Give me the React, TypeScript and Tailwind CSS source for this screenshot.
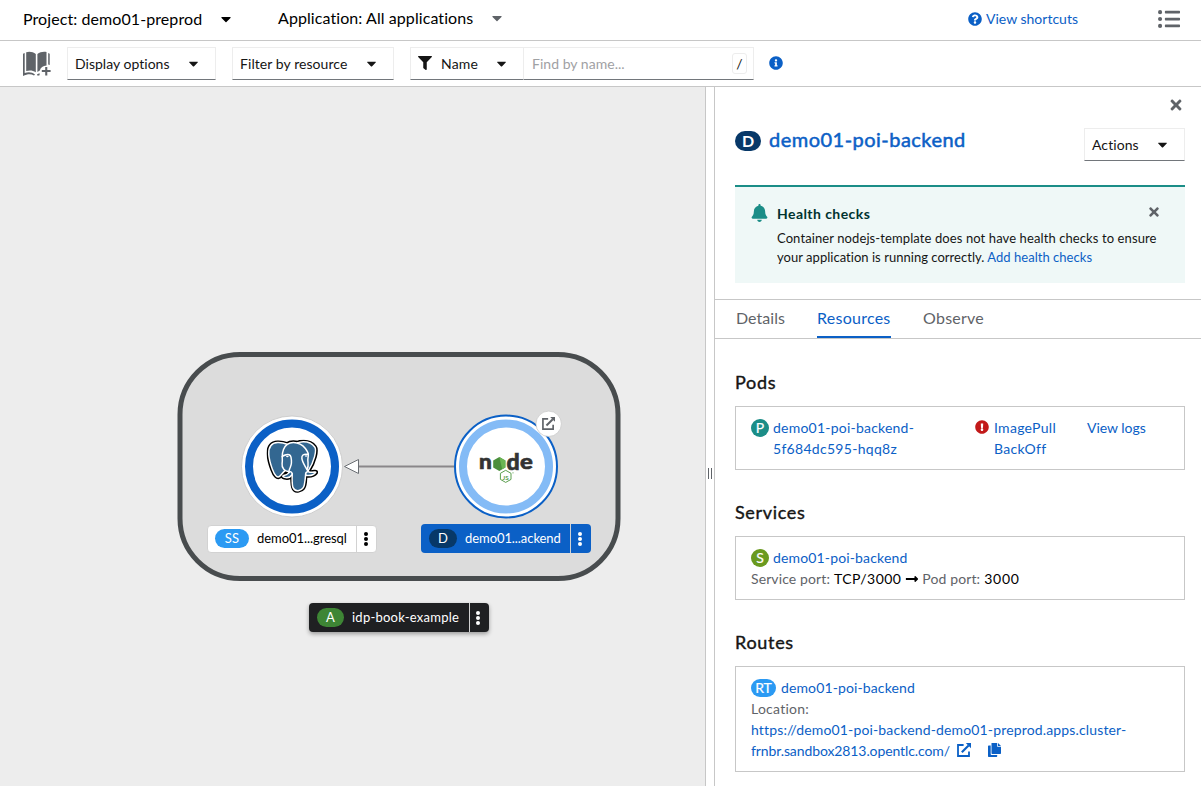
import type { ReactNode } from 'react';
import {
  FaBell,
  FaCaretDown,
  FaExclamationCircle,
  FaFilter,
  FaInfoCircle,
  FaListUl,
  FaLongArrowAltRight,
  FaQuestionCircle,
  FaTimes,
} from 'react-icons/fa';

function ExternalLink({ className }: { className: string }) {
  return (
    <svg viewBox="0 0 14 14" className={className} fill="none" stroke="currentColor">
      <path d="M6.6 2H1v11h11V8.4" strokeWidth="1.8" />
      <path d="M4.8 9.2 11.6 2.4" strokeWidth="2.1" />
      <path d="M8.8 0H14v5.2z" fill="currentColor" stroke="none" />
    </svg>
  );
}

function CopyIcon() {
  return (
    <svg viewBox="0 0 13 14" className="h-[14px] w-[13px]" fill="currentColor">
      <path d="M3.5 0h5.7v3.8H13v6.5a.7.7 0 0 1-.7.7H4.2a.7.7 0 0 1-.7-.7z" />
      <path d="M10 0l3 3h-3z" />
      <path d="M0 3.2c0-.4.3-.7.7-.7h2v8.7c0 .4.3.7.7.7h5.8v1.4c0 .4-.3.7-.7.7H.7a.7.7 0 0 1-.7-.7z" />
    </svg>
  );
}

function BookIcon() {
  return (
    <svg viewBox="0 0 28 26" className="h-[26px] w-7" fill="#5f6368">
      <path d="M3.200 1.200C6.500 .1 10 .8 12.800 3V21.200C9.800 19.200 6.500 19 3.200 20z" />
      <path d="M14.400 3C17 1.200 20 .3 23.500 1V14.500C20 14.800 17.500 16.500 16.800 19.500L14.400 21z" />
      <path d="M0 2.800l1.700-.8V22C5.500 20.500 9 21 12 23.400l-1 1.200C8 22.800 4.500 23 0 25z" />
      <path d="M14 23.300l2.600-1v1.900l-2 .5zM25.200 2l1.500.8V14l-1.500-.4zM22.200 16h2.100v3H27.600v2.100h-3.300v3.400h-2.100v-3.400h-3.400V19h3.400z" />
    </svg>
  );
}

function Toggle({ className, label }: { className: string; label: ReactNode }) {
  return (
    <button className={`flex h-[33px] items-center border border-[#ededed] border-b-[#72767b] text-left text-sm text-[#151515] ${className}`}>
      {label}
      <FaCaretDown className="h-[15px] w-[15px]" />
    </button>
  );
}

function PostgresLogo() {
  return (
    <svg x="266.500" y="439.500" width="51.500" height="53.500" viewBox="0 0 432.071 445.383">
      <path
        fill="#000"
        stroke="#000"
        strokeWidth="37.4"
        d="M323.205,324.227c2.833-23.601,1.984-27.062,19.563-23.239l4.463,0.392c13.517,0.615,31.199-2.174,41.587-7c22.362-10.376,35.622-27.7,13.572-23.148c-50.297,10.376-53.755-6.655-53.755-6.655c53.111-78.803,75.313-178.836,56.149-203.322C352.514-5.534,262.036,26.049,260.522,26.869l-0.482,0.089c-9.938-2.062-21.06-3.294-33.554-3.496c-22.761-0.374-40.032,5.967-53.133,15.904c0,0-161.408-66.498-153.899,83.628c1.597,31.936,45.777,241.655,98.47,178.31c19.259-23.163,37.871-42.748,37.871-42.748c9.242,6.14,20.307,9.272,31.912,8.147l0.897-0.765c-0.281,2.876-0.157,5.689,0.359,9.019c-13.572,15.167-9.584,17.83-36.723,23.416c-27.457,5.659-11.326,15.734-0.797,18.367c12.768,3.193,42.305,7.716,62.268-20.224l-0.795,3.188c5.325,4.26,4.965,30.619,5.72,49.452c0.756,18.834,2.017,36.409,5.856,46.771c3.839,10.36,8.369,37.05,44.036,29.406c29.809-6.388,52.6-15.582,54.677-101.107"
      />
      <path
        fill="#336791"
        d="M402.395,271.23c-50.302,10.376-53.76-6.655-53.76-6.655c53.111-78.808,75.313-178.843,56.153-203.326c-52.27-66.785-142.752-35.2-144.262-34.38l-0.486,0.087c-9.938-2.063-21.06-3.292-33.56-3.496c-22.761-0.373-40.026,5.967-53.127,15.902c0,0-161.411-66.495-153.904,83.63c1.597,31.938,45.776,241.657,98.471,178.312c19.26-23.163,37.869-42.748,37.869-42.748c9.243,6.14,20.308,9.272,31.908,8.147l0.901-0.765c-0.28,2.876-0.152,5.689,0.361,9.019c-13.575,15.167-9.586,17.83-36.723,23.416c-27.459,5.659-11.328,15.734-0.796,18.367c12.768,3.193,42.307,7.716,62.266-20.224l-0.796,3.188c5.319,4.26,9.054,27.711,8.428,48.969c-0.626,21.259-1.044,35.854,3.147,47.254c4.191,11.4,8.368,37.05,44.042,29.406c29.809-6.388,45.256-22.942,47.405-50.555c1.525-19.631,4.976-16.729,5.194-34.28l2.768-8.309c3.192-26.611,0.507-35.196,18.872-31.203l4.463,0.392c13.517,0.615,31.208-2.174,41.591-7c22.358-10.376,35.618-27.7,13.573-23.148z"
      />
      <g fill="none" stroke="#fff" strokeWidth="12.5" strokeLinecap="round" strokeLinejoin="round">
        <path d="M215.866,286.484c-1.385,49.516,0.348,99.377,5.193,111.495c4.848,12.118,15.223,35.688,50.9,28.045c29.806-6.39,40.651-18.756,45.357-46.051c3.466-20.082,10.148-75.854,11.005-87.281" />
        <path d="M173.104,38.256c0,0-161.521-66.016-154.012,84.109c1.597,31.938,45.779,241.664,98.473,178.316c19.256-23.166,36.671-41.335,36.671-41.335" />
        <path d="M260.349,26.207c-5.591,1.753,89.848-34.889,144.087,34.417c19.159,24.484-3.043,124.519-56.153,203.329" />
        <path d="M348.282,263.953c0,0,3.461,17.036,53.764,6.653c22.04-4.552,8.776,12.774-13.577,23.155c-18.345,8.514-59.474,10.696-60.146-1.069c-1.729-30.355,21.647-21.133,19.96-28.739c-1.525-6.85-11.979-13.573-18.894-30.338c-6.037-14.633-82.796-126.849,21.287-110.183c3.813-0.789-27.146-99.002-124.553-100.599c-97.385-1.597-94.19,119.762-94.19,119.762" />
        <path d="M188.604,274.334c-13.577,15.166-9.584,17.829-36.723,23.417c-27.459,5.66-11.326,15.733-0.797,18.365c12.768,3.195,42.307,7.718,62.266-20.229c6.078-8.509-0.036-22.086-8.385-25.547c-4.034-1.671-9.428-3.765-16.361,3.994z" />
        <path d="M187.715,274.069c-1.368-8.917,2.93-19.528,7.536-31.942c6.922-18.626,22.893-37.255,10.117-96.339c-9.523-44.029-73.396-9.163-73.436-3.193c-0.039,5.968,2.889,30.26-1.067,58.548c-5.162,36.913,23.488,68.132,56.479,64.938" />
        <path d="M350.676,123.432c0.863,15.994-3.445,26.888-3.988,43.914c-0.804,24.748,11.799,53.074-7.191,81.435" />
      </g>
      <ellipse cx="175" cy="141" rx="11" ry="7" fill="#fff" />
      <ellipse cx="332" cy="136" rx="10" ry="6" fill="#fff" />
    </svg>
  );
}

function NodeLogo() {
  return (
    <g fontFamily="Lato, sans-serif">
      <g fill="#333" stroke="#333" strokeWidth=".6" fontWeight="900">
        <text x="478.900" y="469.300" fontSize="20" textLength="12.800" lengthAdjust="spacingAndGlyphs">n</text>
        <text x="506.600" y="469.500" fontSize="22" textLength="13.200" lengthAdjust="spacingAndGlyphs">d</text>
        <text x="520" y="469.300" fontSize="20" textLength="12.800" lengthAdjust="spacingAndGlyphs">e</text>
      </g>
      <path d="M499.300 457l6.100 3.500v7l-6.100 3.500-6.100-3.500v-7z" fill="#4a8f3c" />
      <path d="M499.300 457l6.100 3.500v7l-3.200 1.800z" fill="#6bb552" />
      <path d="M505.700 470.300l5.300 3v6.100l-5.300 3-5.300-3v-6.100z" fill="#fff" stroke="#5a9e4d" strokeWidth="1" />
      <text x="502.600" y="479.500" fontSize="6.200" fontWeight="700" fill="#5a9e4d" textLength="6.200" lengthAdjust="spacingAndGlyphs">JS</text>
      <circle cx="513" cy="472.800" r=".6" fill="#5a9e4d" />
    </g>
  );
}

function Kebab({ className }: { className: string }) {
  return (
    <span className={`flex h-full shrink-0 flex-col items-center justify-center gap-px border-l ${className}`}>
      <i className="size-1 rounded-full bg-current" />
      <i className="size-1 rounded-full bg-current" />
      <i className="size-1 rounded-full bg-current" />
    </span>
  );
}

function NodeLabel({ className, badge, badgeClass, text, textClass, kebabClass }: {
  className: string; badge: string; badgeClass: string; text: string; textClass: string; kebabClass: string;
}) {
  return (
    <div className={`absolute flex items-center overflow-hidden rounded-[4px] text-[13px] ${className}`}>
      <span className={`flex h-[19px] shrink-0 items-center justify-center rounded-full text-[13px] text-white ${badgeClass}`}>{badge}</span>
      <span className={`flex-1 whitespace-nowrap pl-2 ${textClass}`}>{text}</span>
      <Kebab className={kebabClass} />
    </div>
  );
}

function Topology() {
  return (
    <main className="relative w-[705px] shrink-0 overflow-hidden bg-[#ededed]">
      <svg className="absolute left-0 top-0 h-[699px] w-[705px]" viewBox="0 87 705 699">
        <rect x="180" y="354.500" width="438" height="224" rx="60" fill="#dcdcdc" stroke="#484c4e" strokeWidth="5" />
        <path d="M358 466.500h96" stroke="#8a878a" strokeWidth="2" />
        <path d="M344.500 466.500l14-7v14z" fill="#fff" stroke="#6a6e73" />
        <circle cx="292" cy="466.500" r="50.500" fill="#fff" stroke="#c4c4c4" strokeWidth=".8" />
        <circle cx="292" cy="466.500" r="43" fill="none" stroke="#0b60c6" strokeWidth="8" />
        <PostgresLogo />
        <circle cx="506" cy="466.500" r="51" fill="#fff" stroke="#0b60c6" strokeWidth="2" />
        <circle cx="506" cy="466.500" r="43" fill="none" stroke="#84bbf6" strokeWidth="8" />
        <NodeLogo />
        <circle cx="548.700" cy="423.800" r="12.700" fill="#fff" stroke="#c4c4c4" strokeWidth=".7" />
      </svg>
      <ExternalLink className="absolute left-[542px] top-[330px] size-[13px] text-[#5f6368]" />
      <NodeLabel
        className="left-[207px] top-[438px] h-7 w-[170px] border border-[#d2d2d2] bg-white pl-[7px] text-black"
        badge="SS" badgeClass="-mt-px w-[34px] bg-[#2b9af3] tracking-[.3px]"
        text="demo01...gresql" textClass="tracking-[-.05px]" kebabClass="w-5 border-[#d2d2d2] pr-[2px]"
      />
      <NodeLabel
        className="left-[421px] top-[437px] h-[29px] w-[170px] bg-[#0b60c6] pl-2 text-white"
        badge="D" badgeClass="w-7 bg-[#073868]"
        text="demo01...ackend" textClass="tracking-[-.07px]" kebabClass="w-[21px] border-[#d2d2d2] pr-[3px]"
      />
      <NodeLabel
        className="left-[309px] top-[516px] h-[29px] w-[180px] bg-[#1f2022] pl-2 text-white shadow-[0_2px_4px_rgba(0,0,0,.35)]"
        badge="A" badgeClass="w-[27px] bg-[#3e8635]"
        text="idp-book-example" textClass="tracking-[.24px]" kebabClass="w-5 border-[#d2d2d2] pr-[3px]"
      />
    </main>
  );
}

function Badge({ className, children }: { className: string; children: ReactNode }) {
  return <span className={`flex h-[18px] shrink-0 items-center justify-center rounded-full text-sm text-white [-webkit-text-stroke:.2px] ${className}`}>{children}</span>;
}

function Section({ title, titleClass, className, children }: { title: string; titleClass: string; className: string; children: ReactNode }) {
  return (
    <section className="mb-[29px]">
      <h2 className={`mb-2.5 text-lg leading-[27px] text-[#151515] [-webkit-text-stroke:.4px] ${titleClass}`}>{title}</h2>
      <div className={`border border-[#c7c7c7] px-[15px] pt-[10px] text-sm leading-[21px] ${className}`}>{children}</div>
    </section>
  );
}

const link = 'text-[#0b60c6]';

function SidePanel() {
  return (
    <aside className="flex w-[486px] shrink-0 flex-col bg-white">
      <div className="flex h-[36px] shrink-0 items-center justify-end pr-[17px]">
        <FaTimes className="size-4 text-[#5f6368]" />
      </div>
      <div className="ml-5 mr-4 flex h-[62px] shrink-0 items-start justify-between pt-[5px]">
        <div className="flex items-center gap-2">
          <span className="mt-px flex h-5 w-[26px] items-center justify-center rounded-full bg-[#073868] text-base font-bold text-white">D</span>
          <h1 className="-mt-[2px] whitespace-nowrap text-xl leading-[26px] tracking-[.48px] text-[#0b60c6] [-webkit-text-stroke:.5px]">demo01-poi-backend</h1>
        </div>
        <Toggle className="w-[101px] justify-between pl-[7px] pr-[14px] tracking-[.08px]" label="Actions" />
      </div>
      <div className="ml-5 mr-4 flex h-[98px] shrink-0 border-t-2 border-[#1b8d87] bg-[#eff8f7] pl-4 pt-[17px]">
        <FaBell className="h-[18px] w-[17px] shrink-0 text-[#1b8d87]" />
        <div className="ml-[9px] w-[390px] text-[13px] leading-[19px] text-[#151515]">
          <h4 className="mb-[6px] text-sm font-bold leading-[19px] tracking-[.43px] text-[#003330]">Health checks</h4>
          <p className="whitespace-nowrap tracking-[.1px]">Container nodejs-template does not have health checks to ensure</p>
          <p className="whitespace-nowrap tracking-[.03px]">your application is running correctly. <a className={link}>Add health checks</a></p>
        </div>
        <FaTimes className="-ml-[20px] mt-px size-[14px] shrink-0 text-[#5f6368]" />
      </div>
      <nav className="mt-4 flex h-10 shrink-0 gap-8 border-y border-[#c7c7c7] pl-[21px] text-base leading-[36px] text-[#5f6368]">
        <span className="tracking-[.05px]">Details</span>
        <span className="w-[74px] border-b-2 border-[#0b60c6] tracking-[.25px] text-[#0b60c6]">Resources</span>
        <span className="tracking-[.24px]">Observe</span>
      </nav>
      <div className="ml-5 mr-4 shrink-0 pt-[30px]">
        <Section title="Pods" titleClass="tracking-[.7px]" className="flex h-16">
          <Badge className="mt-[2px] w-[18px] bg-[#1b8d87]">P</Badge>
          <div className={`ml-1 w-[202px] ${link}`}>
            <div className="tracking-[.22px]">demo01-poi-backend-</div>
            <div className="tracking-[.29px]">5f684dc595-hqq8z</div>
          </div>
          <FaExclamationCircle className="mt-[3px] size-[14px] shrink-0 text-[#c21a1a]" />
          <div className={`ml-[5px] w-[93px] tracking-[.29px] ${link}`}>ImagePull<br />BackOff</div>
          <a className={`tracking-[-.03px] ${link}`}>View logs</a>
        </Section>
        <Section title="Services" titleClass="tracking-[.66px]" className="h-16">
          <div className="flex items-center gap-1">
            <Badge className="mt-px w-[18px] bg-[#6a9a1f]">S</Badge>
            <a className={`tracking-[.15px] ${link}`}>demo01-poi-backend</a>
          </div>
          <div className="flex items-center gap-1 text-[#5f6368]">
            <span className="tracking-[.11px]">Service port:</span>
            <span className="tracking-[.45px] text-black">TCP/3000</span>
            <FaLongArrowAltRight className="-mr-px size-[14px] text-black" />
            <span className="tracking-[.11px]">Pod port:</span>
            <span className="tracking-[.75px] text-black">3000</span>
          </div>
        </Section>
        <Section title="Routes" titleClass="tracking-[.7px]" className="h-[106px]">
          <div className="flex items-center gap-[5px]">
            <Badge className="mt-px w-[25px] bg-[#2b9af3]">RT</Badge>
            <a className={`tracking-[.12px] ${link}`}>demo01-poi-backend</a>
          </div>
          <div className="tracking-[.25px] text-[#5f6368]">Location:</div>
          <div className={`whitespace-nowrap tracking-[.15px] ${link}`}>https://demo01-poi-backend-demo01-preprod.apps.cluster-</div>
          <div className={`flex items-center ${link}`}>
            <span className="w-[206px] tracking-[-.1px]">frnbr.sandbox2813.opentlc.com/</span>
            <ExternalLink className="-mt-px mr-[17px] size-[14px]" />
            <span className="-mt-px"><CopyIcon /></span>
          </div>
        </Section>
      </div>
    </aside>
  );
}

export default function App() {
  return (
    <div className="flex h-[786px] w-[1201px] flex-col overflow-hidden bg-white font-[Lato,sans-serif] text-[#151515]">
      <header className="flex h-[41px] shrink-0 items-center border-b border-[#c7c7c7] pb-[2px] pl-[23px] pr-[21px] text-base text-black">
        <span className="w-[195px] whitespace-nowrap tracking-[.08px]">Project: demo01-preprod</span>
        <FaCaretDown className="size-4" />
        <span className="ml-[44px] w-[211px] -translate-y-px whitespace-nowrap tracking-[.08px]">Application: All applications</span>
        <FaCaretDown className="size-4 -translate-y-px text-[#5f6368]" />
        <FaQuestionCircle className="ml-auto mr-1 size-[14px] text-[#0b60c6]" />
        <a className="mr-[80px] text-sm tracking-[.01px] text-[#0b60c6]">View shortcuts</a>
        <FaListUl className="-mt-px size-[22px] text-[#5f6368]" />
      </header>
      <div className="flex h-[46px] shrink-0 items-center border-b border-[#c7c7c7] pl-[23px]">
        <BookIcon />
        <Toggle className="ml-4 w-[149px] justify-between pl-[7px] pr-[14px] tracking-[.02px]" label="Display options" />
        <Toggle className="ml-4 w-[162px] justify-between pl-[7px] pr-[14px] tracking-[.07px]" label="Filter by resource" />
        <Toggle
          className="ml-4 w-[114px] justify-between pl-[7px] pr-[14px] tracking-[.16px]"
          label={<span className="flex items-center gap-[9px]"><FaFilter className="-mt-[2px] size-[14px]" />Name</span>}
        />
        <div className="flex h-[33px] w-[230px] items-center justify-between border border-l-0 border-[#ededed] border-b-[#72767b] pl-2 pr-[6px] text-sm tracking-[.03px] text-[#9fa1a4]">
          Find by name...
          <kbd className="flex h-[21px] w-[15px] items-center justify-center rounded-[3px] border border-[#ededed] font-[Lato,sans-serif] text-sm text-[#151515]">/</kbd>
        </div>
        <FaInfoCircle className="-mt-[2px] ml-[15px] size-[14px] text-[#0b60c6]" />
      </div>
      <div className="flex min-h-0 flex-1">
        <Topology />
        <div className="flex w-2.5 shrink-0 items-center justify-center gap-[2px] border-x border-[#c7c7c7] bg-white pt-[74px]">
          <i className="h-[11px] w-px bg-[#5f6368]" />
          <i className="h-[11px] w-px bg-[#5f6368]" />
        </div>
        <SidePanel />
      </div>
    </div>
  );
}
